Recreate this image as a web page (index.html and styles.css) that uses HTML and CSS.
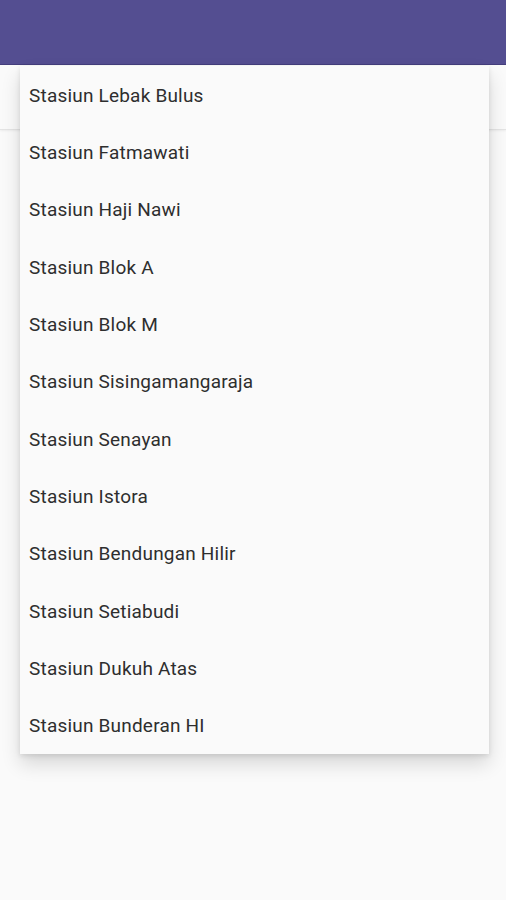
FILE: index.html
```html
<!DOCTYPE html>
<html lang="id">
<head>
    <meta charset="UTF-8">
    <meta name="viewport" content="width=device-width, initial-scale=1.0">
    <title>Stasiun MRT</title>
    <link rel="stylesheet" href="styles.css">
</head>
<body>
    <header class="appbar"></header>

    <!-- spinner row behind the open dropdown -->
    <div class="picker-row"></div>

    <!-- open dropdown -->
    <ul class="dropdown">
        <li>Stasiun Lebak Bulus</li>
        <li>Stasiun Fatmawati</li>
        <li>Stasiun Haji Nawi</li>
        <li>Stasiun Blok A</li>
        <li>Stasiun Blok M</li>
        <li>Stasiun Sisingamangaraja</li>
        <li>Stasiun Senayan</li>
        <li>Stasiun Istora</li>
        <li>Stasiun Bendungan Hilir</li>
        <li>Stasiun Setiabudi</li>
        <li>Stasiun Dukuh Atas</li>
        <li>Stasiun Bunderan HI</li>
    </ul>
</body>
</html>
```

FILE: styles.css
```css
html, body {
    margin: 0;
    padding: 0;
    height: 100%;
}
body {
    font-family: Roboto, "Noto Sans", Arial, sans-serif;
    background: #fafafa;
    position: relative;
}
.appbar {
    height: 64px;
    background: #544e91;
    border-bottom: 1px solid #453f7d;
}
.picker-row {
    height: 64px;
    background: #fafafa;
    border-bottom: 1px solid #e4e4e4;
    box-shadow: 0 1px 2px rgba(0, 0, 0, 0.06);
}
.dropdown {
    position: absolute;
    top: 66px;
    left: 20px;
    width: 469px;
    margin: 0;
    padding: 0;
    list-style: none;
    background: #fafafa;
    box-shadow: 0 10px 18px rgba(0, 0, 0, 0.14), 0 2px 5px rgba(0, 0, 0, 0.1);
}
.dropdown li {
    height: 57.33px;
    display: flex;
    align-items: center;
    padding-left: 9px;
    padding-top: 1px;
    box-sizing: border-box;
    font-size: 19px;
    letter-spacing: 0.2px;
    color: #2e2e2e;
}
```
